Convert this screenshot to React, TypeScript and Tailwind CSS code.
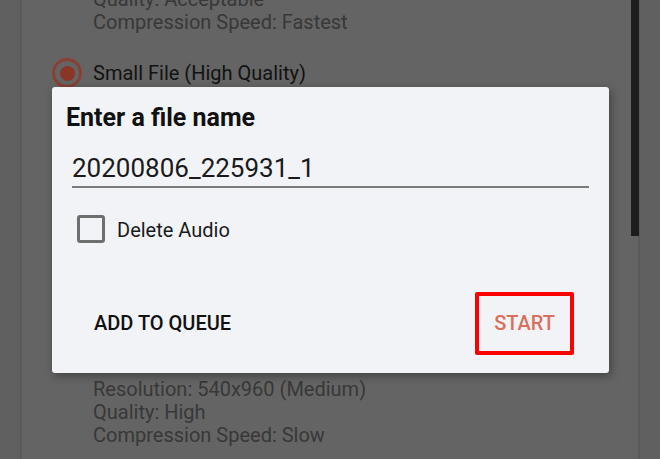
const olderLines = ["Resolution: 720x1280 (High)", "Quality: Acceptable", "Compression Speed: Fastest"];

const presets = [
   {
      title: "Small File (High Quality)",
      lines: ["Resolution: 720x1280 (High)", "Quality: Medium", "Compression Speed: Fast"],
   },
   {
      title: "Small File (Good Quality)",
      lines: ["Resolution: 540x960 (Medium)", "Quality: Medium", "Compression Speed: Medium"],
   },
   {
      title: "Medium File (Best Quality)",
      lines: ["Resolution: 540x960 (Medium)", "Quality: High", "Compression Speed: Slow"],
   },
];

function Details({ lines }: { lines: string[] }) {
   return (
      <div className="flex flex-col pl-[71px] text-[20px] leading-[23px] text-[#383838]">
         {lines.map((line) => (
            <span key={line}>{line}</span>
         ))}
      </div>
   );
}

function Radio() {
   return (
      <div className="flex items-center justify-center size-[30px] rounded-full border-[3px] border-[#8a3f33] shrink-0">
         <div className="size-[15px] rounded-full bg-[#8b3527]" />
      </div>
   );
}

export default function App() {
   return (
      <div
         className="relative w-[660px] h-[459px] overflow-hidden bg-[#606060]"
         style={{ fontFamily: "Roboto, 'Noto Sans', sans-serif" }}
      >
         {/* dimmed list behind the dialog */}
         <div className="ml-[20px] w-[620px] h-full flex flex-col bg-[#646464] border-x-2 border-[#5a5a5a]">
            <div className="-mt-[35px] flex flex-col">
               <Details lines={olderLines} />
               <div className="flex flex-col gap-[22px] mt-[24px]">
                  {presets.map((p) => (
                     <div key={p.title} className="flex flex-col">
                        <div className="flex items-center gap-[11px] pl-[30px] h-[30px]">
                           <Radio />
                           <span className="text-[20px] text-[#121212]">{p.title}</span>
                        </div>
                        <div className="mt-[16px]">
                           <Details lines={p.lines} />
                        </div>
                     </div>
                  ))}
               </div>
            </div>
         </div>

         {/* scrollbar */}
         <div className="absolute left-[631px] top-0 w-[8px] h-[236px] bg-[#1d1d1d]" />

         {/* dialog */}
         <div className="absolute left-[52px] top-[87px] w-[557px] h-[286px] flex flex-col bg-[#f2f3f7] rounded-[3px] shadow-[2px_3px_10px_rgba(0,0,0,0.35)] pt-[16px]">
            <h2 className="pl-[14px] text-[25px] leading-[30px] font-bold text-[#111]">Enter a file name</h2>
            <div className="mx-[20px] mt-[20px] pb-[3px] border-b-2 border-[#7b7b7b] text-[26px] leading-[30px] text-[#1a1a1a]">
               20200806_225931_1
            </div>
            <div className="flex items-center gap-[12px] pl-[25px] mt-[25px]">
               <div className="size-[28px] rounded-[3px] border-[3px] border-[#6f6f6f]" />
               <span className="text-[20px] text-[#1a1a1a] mt-[2px]">Delete Audio</span>
            </div>
            <div className="flex items-center justify-between mt-[47px] pl-[42px] pr-[35px]">
               <span className="text-[20px] font-medium text-[#111] -mt-[1px]">ADD TO QUEUE</span>
               <div className="flex items-center justify-center w-[99px] h-[63px] border-4 border-[#ff0000] rounded-[2px]">
                  <span className="text-[20px] font-medium text-[#d9705e] -mt-[1px]">START</span>
               </div>
            </div>
         </div>
      </div>
   );
}
